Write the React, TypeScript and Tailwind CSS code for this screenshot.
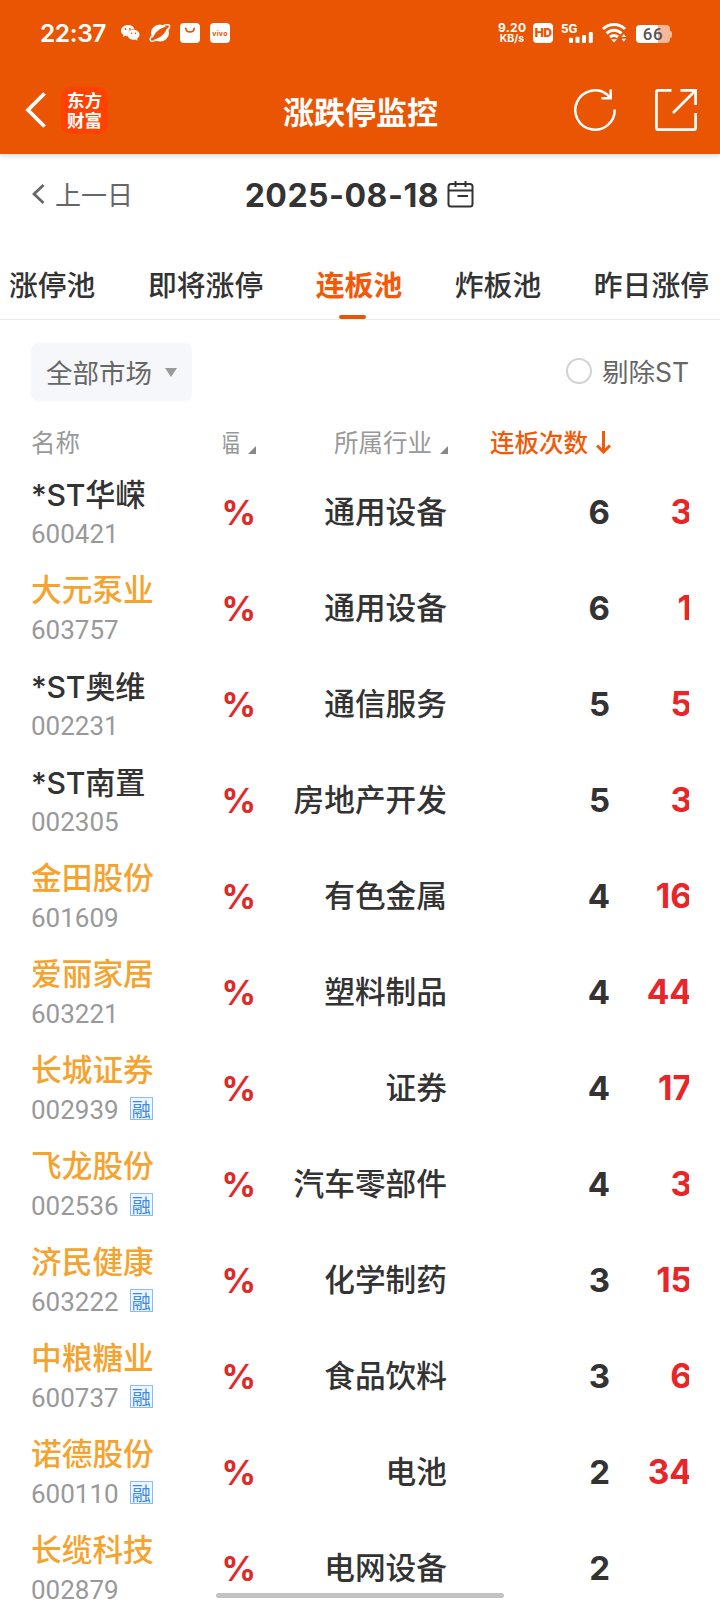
import React from "react";

type Stock = {
  name: string;
  code: string;
  industry: string;
  streak: string;
  next: string;
  margin?: boolean;
  dark?: boolean;
};

const stocks: Stock[] = [
  { name: "*ST华嵘", code: "600421", industry: "通用设备", streak: "6", next: "3", dark: true },
  { name: "大元泵业", code: "603757", industry: "通用设备", streak: "6", next: "1" },
  { name: "*ST奥维", code: "002231", industry: "通信服务", streak: "5", next: "5", dark: true },
  { name: "*ST南置", code: "002305", industry: "房地产开发", streak: "5", next: "3", dark: true },
  { name: "金田股份", code: "601609", industry: "有色金属", streak: "4", next: "16" },
  { name: "爱丽家居", code: "603221", industry: "塑料制品", streak: "4", next: "44" },
  { name: "长城证券", code: "002939", industry: "证券", streak: "4", next: "17", margin: true },
  { name: "飞龙股份", code: "002536", industry: "汽车零部件", streak: "4", next: "3", margin: true },
  { name: "济民健康", code: "603222", industry: "化学制药", streak: "3", next: "15", margin: true },
  { name: "中粮糖业", code: "600737", industry: "食品饮料", streak: "3", next: "6", margin: true },
  { name: "诺德股份", code: "600110", industry: "电池", streak: "2", next: "34", margin: true },
  { name: "长缆科技", code: "002879", industry: "电网设备", streak: "2", next: "" },
];

const num = "font-['Inter','Noto_Sans_CJK_SC',sans-serif]";

function StatusBar() {
  return (
    <div className="flex h-[66px] items-center pl-10 pr-[48px] text-white">
      <span className="w-[68px] whitespace-nowrap font-['Inter',sans-serif] text-[24.500px] leading-none font-semibold tracking-[-0.400px]">22:37</span>
      <svg className="ml-[12px] h-5 w-[20px]" viewBox="0 0 20 20">
        <path d="M8 2C3.900 2 1 4.600 1 7.700c0 1.800 1 3.300 2.500 4.300L3 14l2.300-1.200c.9.2 1.800.4 2.700.3-1-4 2-7 6.500-7C13.700 3.600 11.200 2 8 2Z" fill="white" />
        <path d="M13.500 6.800c-3.400 0-6 2.200-6 5s2.600 5 6 5c.7 0 1.400-.1 2-.3L17.500 17.700l-.4-2c1.400-1 2.400-2.300 2.400-3.900 0-2.800-2.600-5-6-5Z" fill="white" />
        <g fill="#ea5504"><circle cx="5.500" cy="6" r=".9" /><circle cx="10" cy="6" r=".9" /><circle cx="11.500" cy="10.300" r=".8" /><circle cx="15.500" cy="10.300" r=".8" /></g>
      </svg>
      <svg className="ml-[9px] h-5 w-[22px]" viewBox="0 0 22 20">
        <ellipse cx="11" cy="10" rx="9" ry="8.600" fill="white" />
        <path d="M3.300 16.800C5 10 10.500 4.500 18.800 3.300C16.800 10.500 11 15.700 3.300 16.800Z" fill="#ea5504" />
        <path d="M2.600 13C.6 16 .8 18.300 3 18.300c1.500 0 3-.5 4.500-1.300M14.500 2.500C18 1.200 21 1.300 20.600 3.500c-.2 1.200-.8 2.300-1.600 3.500" fill="none" stroke="white" strokeWidth="1.400" />
      </svg>
      <svg className="ml-[9px] size-5" viewBox="0 0 20 20">
        <rect width="20" height="20" rx="4" fill="white" />
        <path d="M5.800 5.500c.6 4.600 7.800 4.600 8.400 0" fill="none" stroke="#ea5504" strokeWidth="1.800" strokeLinecap="round" />
      </svg>
      <span className="ml-[10px] flex size-5 items-center justify-center rounded bg-white font-['Inter',sans-serif] text-[7px] leading-none font-bold tracking-[0.300px] text-[#ea5504]">vivo</span>
      <div className="flex-1" />
      <div className="w-[28px] whitespace-nowrap text-center font-['Inter',sans-serif] font-bold">
        <div className="text-[12px] leading-[11px] tracking-[0.300px]">9.20</div>
        <div className="text-[10.500px] leading-[11px]">KB/s</div>
      </div>
      <span className="ml-[7px] flex size-5 items-center justify-center rounded bg-white font-['Roboto',sans-serif] text-[13.500px] leading-none font-black tracking-[-0.500px] text-[#ea5504]">HD</span>
      <div className="ml-[8px] flex h-5 w-[33px] items-end">
        <span className="w-[16px] self-start font-['Roboto',sans-serif] text-[13px] leading-[11px] font-bold">5G</span>
        <svg className="-ml-[8px] h-5 w-6 shrink-0" viewBox="0 0 24 20" fill="white">
          <rect x="0" y="14.700" width="4" height="5.300" rx="1" /><rect x="6.500" y="13.700" width="4" height="6.300" rx="1" /><rect x="13" y="12" width="4" height="8" rx="1" /><rect x="19.800" y="9" width="4" height="11" rx="1" />
        </svg>
      </div>
      <svg className="ml-[8px] h-5 w-[26px]" viewBox="0 0 26 20" fill="none" stroke="white" strokeWidth="2.900">
        <path d="M1 6C7.500 0 16.500 0 23 6M4.500 10.400c4.500-4.200 10.500-4.200 15 0M8 14c2.500-2 5.500-2 8 0" />
        <path d="M9 16.200h6l-3 3.300Z" fill="white" stroke="none" />
        <path d="m19.500 14 2.300-3 2.300 3ZM19.500 15.700l2.300 3 2.300-3Z" fill="white" stroke="none" />
      </svg>
      <div className="ml-[8px] flex items-center pt-[2px]">
        <div className="flex h-[18px] w-[34px] items-center justify-center rounded-[4px] bg-linear-to-r from-white from-66% to-[#f6b896] to-66% font-['Roboto',sans-serif] text-[17px] leading-none font-medium tracking-[0.500px] text-[#555]">66</div>
        <div className="h-[7px] w-[2px] rounded-r bg-[#f6b896]" />
      </div>
    </div>
  );
}

function TitleBar() {
  return (
    <div className="flex h-[88px] items-center pl-[25px] pr-[23px] text-white">
      <svg className="h-[36px] w-[22px]" viewBox="0 0 22 36" fill="none" stroke="white" strokeWidth="3.800"><path d="M19.500 1.500 3 18l16.500 16.500" /></svg>
      <div className="ml-[14px] flex size-[47px] flex-col items-center justify-center rounded-[9px] bg-[#ff4200] font-['Noto_Sans_CJK_SC',sans-serif] text-[17.500px] leading-[20px] font-bold">
        <span>东方</span><span>财富</span>
      </div>
      <h1 className="ml-[175px] whitespace-nowrap font-['Noto_Sans_CJK_SC',sans-serif] text-[31px] leading-none font-bold">涨跌停监控</h1>
      <div className="flex-1" />
      <svg className="size-[42px]" viewBox="0 0 42 42" fill="none" stroke="white" strokeWidth="2.500">
        <path d="M40.700 20.500A19.700 19.700 0 1 1 33 5.400L36.500 9M36.700 .5v8.700H27.500" />
      </svg>
      <svg className="ml-[39px] size-[42px]" viewBox="0 0 42 42" fill="none" stroke="white" strokeWidth="2.700">
        <path d="M16.500 1.400H3Q1.400 1.400 1.400 3v36q0 1.600 1.600 1.600h36q1.600 0 1.600-1.600V24M25.500 1.400H40.600v14.600M40 2 18 24" />
      </svg>
    </div>
  );
}

function DateRow() {
  return (
    <div className="flex h-[80px] shrink-0 items-center pl-[32px] pr-[246px]">
      <svg className="h-[20px] w-[13px]" viewBox="0 0 13 20" fill="none" stroke="#666" strokeWidth="2.700"><path d="M11.500 1 2 10l9.500 9" /></svg>
      <span className="ml-[10px] whitespace-nowrap text-[26px] leading-none text-[#666]">上一日</span>
      <div className="flex-1" />
      <span className={`${num} whitespace-nowrap pt-[3px] text-[32px] leading-none font-bold tracking-[0.500px] text-[#333]`}>2025-08-18</span>
      <svg className="ml-[8px] h-[27px] w-[27px]" viewBox="0 0 27 27" fill="none" stroke="#333" strokeWidth="2">
        <rect x="1.500" y="3" width="24" height="22.500" rx="2.500" /><path d="M1.500 9.500h24M8.500 0v6M18.500 0v6M10.500 15H21" />
      </svg>
    </div>
  );
}

const tabs = ["涨停池", "即将涨停", "连板池", "炸板池", "昨日涨停"];

function Tabs() {
  return (
    <div className="flex h-[86px] shrink-0 items-end justify-between border-b border-[#ebebeb] pl-[9px] pr-[11px] text-[28.800px] leading-none">
      {tabs.map((tab) => {
        const active = tab === "连板池";
        return (
          <div key={tab} className={active ? "flex flex-col items-center font-bold text-[#f25a0a]" : "flex flex-col items-center font-medium text-[#333]"}>
            <span className="whitespace-nowrap">{tab}</span>
            <span className={active ? "mt-[16px] mr-[14px] h-[4px] w-[27px] rounded-full bg-[#ea5504]" : "mt-[16px] h-[4px] w-[27px]"} />
          </div>
        );
      })}
    </div>
  );
}

function Filters() {
  return (
    <div className="flex h-[81px] shrink-0 items-end justify-between pl-[31px] pr-[31px] text-[26.500px] leading-none text-[#666]">
      <div className="flex h-[58px] w-[161px] items-center rounded-[7px] bg-[#f6f7fa] pl-[15px]">
        <span className="whitespace-nowrap">全部市场</span>
        <svg className="ml-[13px] h-[9px] w-[12px]" viewBox="0 0 12 9"><path d="M0 0h12L6 9Z" fill="#999" /></svg>
      </div>
      <div className="flex h-[58px] items-center">
        <span className="mr-[10px] mb-[3px] size-[26px] rounded-full border-2 border-[#d2d2d2]" />
        <span className="whitespace-nowrap font-['Inter','Noto_Sans_CJK_SC',sans-serif]">剔除ST</span>
      </div>
    </div>
  );
}

function Corner() {
  return <svg className="mb-[1px] ml-[8px] size-[8px] shrink-0" viewBox="0 0 8 8"><path d="M8 0v8H0Z" fill="#888" /></svg>;
}

function TableHead() {
  return (
    <div className="flex h-[64px] shrink-0 items-center pt-[19px] pl-[31px] text-[24.500px] leading-none text-[#999]">
      <span className="w-[192px]">名称</span>
      <div className="flex w-[33px] items-end justify-end overflow-hidden"><span className="whitespace-nowrap">涨幅</span><Corner /></div>
      <div className="flex w-[192px] items-end justify-end"><span className="whitespace-nowrap">所属行业</span><Corner /></div>
      <div className="flex w-[163px] items-center justify-end font-medium text-[#f25a0a]">
        <span className="whitespace-nowrap">连板次数</span>
        <svg className="ml-[8px] h-[23px] w-[15px]" viewBox="0 0 15 23" fill="none" stroke="#f25a0a" strokeWidth="3"><path d="M7.500 0v21M1 14.500l6.500 6.500 6.500-6.500" /></svg>
      </div>
    </div>
  );
}

function Row({ stock }: { stock: Stock }) {
  return (
    <div className="flex h-[96px] shrink-0 items-start pl-[31px] pr-[31px] text-[30.700px] leading-none text-[#333]">
      <div className="flex h-[96px] w-[192px] flex-col pt-[15px]">
        <span className={stock.dark ? "h-[42px] whitespace-nowrap font-['Inter','Noto_Sans_CJK_SC',sans-serif] text-[30.200px] leading-[30px] font-medium tracking-[-0.200px] text-[#333]" : "h-[42px] whitespace-nowrap font-['Roboto','Noto_Sans_CJK_SC',sans-serif] leading-[30px] font-medium text-[#f5a32f]"}>{stock.name}</span>
        <div className="flex h-[24px] items-center font-['Roboto',sans-serif] text-[26px] text-[#999]">
          <span>{stock.code}</span>
          {stock.margin && (
            <span className="ml-[11px] mb-[3px] flex size-[23px] items-center justify-center border border-[#8bbcf0] bg-[#edf5fe] font-['Noto_Sans_CJK_SC',sans-serif] text-[19px] leading-none text-[#3d8be0]">融</span>
          )}
        </div>
      </div>
      <div className="flex h-[95px] flex-1 items-center font-medium">
        <span className={`${num} flex w-[33px] justify-end text-[34px] font-bold text-[#e02a2a]`}>%</span>
        <span className="w-[191px] whitespace-nowrap pb-[5px] text-right">{stock.industry}</span>
        <span className={`${num} w-[163px] text-right text-[33px] font-bold`}>{stock.streak}</span>
        <div className="flex flex-1 justify-end overflow-hidden">
          <span className={`${num} -mr-[3px] text-[33.500px] font-bold text-[#e8262a]`}>{stock.next}</span>
        </div>
      </div>
    </div>
  );
}

export default function App() {
  return (
    <div className="relative flex h-[1600px] w-[720px] flex-col overflow-hidden bg-white font-['Noto_Sans_CJK_SC',sans-serif]">
      <header className="h-[154px] shrink-0 bg-[#ea5504] shadow-[0_1px_6px_rgba(0,0,0,0.2)]">
        <StatusBar />
        <TitleBar />
      </header>
      <DateRow />
      <Tabs />
      <Filters />
      <TableHead />
      <main className="flex shrink-0 flex-col">
        {stocks.map((stock) => <Row key={stock.code} stock={stock} />)}
      </main>
      <div className="absolute bottom-[2px] left-[216px] h-[5px] w-[288px] rounded-full bg-[#c2c2c2]" />
    </div>
  );
}
